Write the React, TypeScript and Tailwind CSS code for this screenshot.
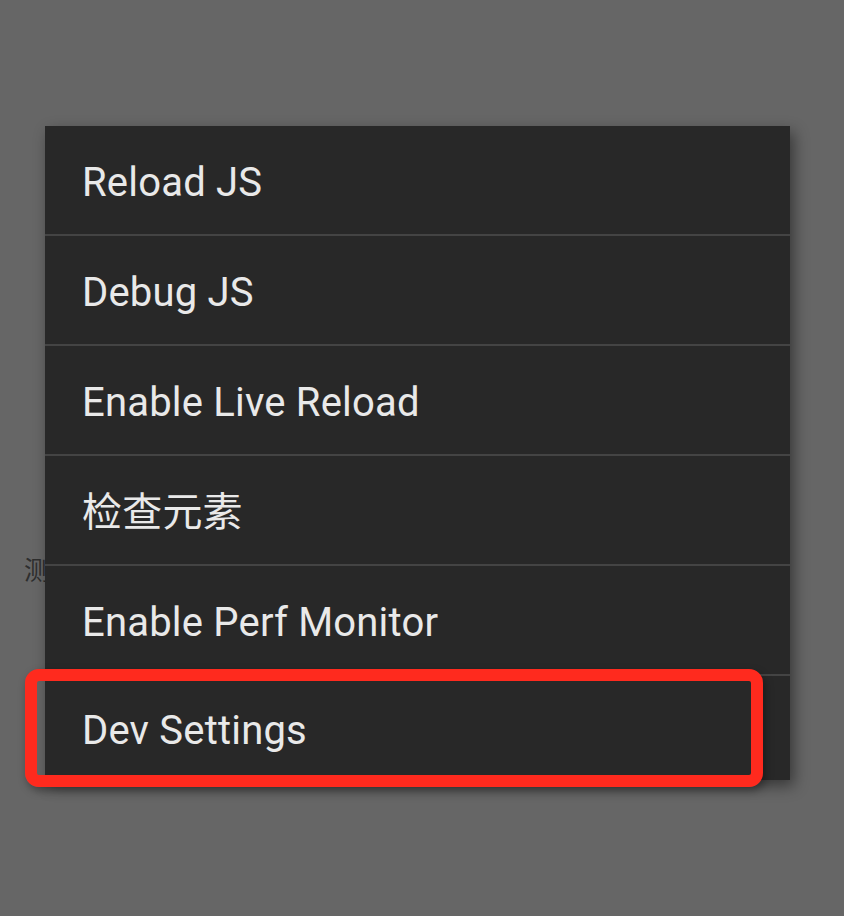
const items = [
  "Reload JS",
  "Debug JS",
  "Enable Live Reload",
  "检查元素",
  "Enable Perf Monitor",
  "Dev Settings",
];

export default function App() {
  return (
    <div
      className="relative w-[844px] h-[916px] overflow-hidden bg-[#666666]"
      style={{ fontFamily: 'Roboto, "Noto Sans CJK SC", sans-serif' }}
    >
      {/* page content behind the dev menu */}
      <div className="absolute left-[24px] top-[553px] text-[26px] leading-[36px] text-[#2e2e2e]">
        测试页面
      </div>

      {/* dev menu */}
      <div className="absolute left-[45px] top-[126px] w-[745px] bg-[#282828] shadow-[4px_6px_14px_rgba(0,0,0,0.45)]">
        {items.map((label, i) => (
          <div
            key={label}
            className={
              i < items.length - 1
                ? "flex h-[110px] items-center border-b-2 border-[#444444] pl-[37px] pt-[5px]"
                : "flex h-[104px] items-center pl-[37px] pt-[5px]"
            }
          >
            <span className="text-[40px] leading-none tracking-[0.2px] text-[#e9e9e9]">
              {label}
            </span>
          </div>
        ))}
      </div>

      {/* highlight around Dev Settings */}
      <div className="absolute left-[25px] top-[669px] w-[738px] h-[118px] rounded-[14px] border-[12px] border-[#ff2a1e] shadow-[2px_4px_8px_rgba(0,0,0,0.35)]" />
    </div>
  );
}
